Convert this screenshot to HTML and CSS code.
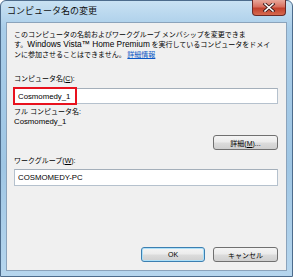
FILE: index.html
```html
<!DOCTYPE html>
<html>

<head>
    <meta charset="utf-8">
    <title>コンピュータ名の変更</title>
    <link rel="stylesheet" href="styles.css">
</head>

<body>

    <div class="window">
        <div class="titlebar">
            <span class="title">コンピュータ名の変更</span>
            <span class="close">
                <svg width="14" height="9" viewBox="0 0 14 9">
                    <path d="M3 1 L11 8 M11 1 L3 8" stroke="#3a1a1a" stroke-width="3.2" stroke-linecap="square"/>
                    <path d="M3 1 L11 8 M11 1 L3 8" stroke="#ffffff" stroke-width="1.6" stroke-linecap="square"/>
                </svg>
            </span>
        </div>

        <div class="client">
            <div class="intro">
                <div class="line">このコンピュータの名前およびワークグループ メンバシップを変更できま</div>
                <div class="line">す。<span class="latin">Windows Vista™ Home Premium</span> を実行しているコンピュータをドメイ</div>
                <div class="line">ンに参加させることはできません。 <a class="more" href="#">詳細情報</a></div>
            </div>

            <label class="label first">コンピュータ名(<u>C</u>):</label>
            <div class="field">
                <input class="textbox" type="text" value="Cosmomedy_1">
                <span class="mark"></span>
            </div>

            <div class="label">フル コンピュータ名:</div>
            <div class="value">Cosmomedy_1</div>

            <div class="row">
                <button class="btn">詳細(<u>M</u>)...</button>
            </div>

            <label class="label group">ワークグループ(<u>W</u>):</label>
            <input class="textbox tall" type="text" value="COSMOMEDY-PC">

            <div class="row footer">
                <button class="btn default">OK</button>
                <button class="btn">キャンセル</button>
            </div>
        </div>
    </div>

</body>

</html>
```

FILE: styles.css
```css
body {
    margin: 0;
    background-color: #ffffff;
    font-family: 'Liberation Sans', 'Noto Sans CJK JP', sans-serif;
    font-size: 7px;
    color: #000000;
}

.window {
    width: 293px;
    height: 277px;
    box-sizing: border-box;
    border: 1px solid #4d6c8c;
    border-radius: 6px 6px 0 0;
    background: linear-gradient(180deg, #c9e2f3 0%, #a9cde9 10%, #9fc6e4 60%, #b6d6ee 100%);
    padding: 0 5px 5px 5px;
    display: flex;
    flex-direction: column;
}

.titlebar {
    height: 21px;
    display: flex;
    align-items: center;
    justify-content: space-between;
    position: relative;
}

.title {
    font-family: 'Noto Sans CJK JP', sans-serif;
    font-size: 9px;
    padding-left: 1px;
    margin-top: -2px;
    color: #111111;
}

.close {
    position: absolute;
    right: 1px;
    top: -1px;
    width: 34px;
    height: 16px;
    box-sizing: border-box;
    border: 1px solid #6b2a26;
    border-top: none;
    border-radius: 0 0 4px 4px;
    background: linear-gradient(180deg, #e9a89b 0%, #d8705f 45%, #c2402c 55%, #d66a4f 100%);
    display: flex;
    align-items: center;
    justify-content: center;
}

.client {
    flex: 1;
    border: 1px solid #8ba3bb;
    background-color: #f0f0f0;
    padding: 6px 8px 8px 7px;
    display: flex;
    flex-direction: column;
}

.intro {
    font-family: 'Noto Sans CJK JP', sans-serif;
    font-size: 7px;
}

.line {
    height: 10px;
    line-height: 10px;
    white-space: nowrap;
}

.latin {
    font-family: 'Liberation Sans', sans-serif;
    font-size: 8.3px;
}

.more {
    color: #0b57c5;
    text-decoration: underline;
}

.label,
.value {
    display: block;
    height: 10px;
    line-height: 10px;
    margin-top: 3px;
    font-family: 'Liberation Sans', 'Noto Sans CJK JP', sans-serif;
}

.label.first {
    margin-top: 15px;
}

.label.group {
    margin-top: 6px;
}

.value {
    margin-top: 0;
    font-size: 7.8px;
}

.field {
    position: relative;
    margin-top: 4px;
}

.textbox {
    display: block;
    width: 100%;
    height: 16px;
    box-sizing: border-box;
    margin: 0;
    margin-top: 3px;
    padding: 0 3px;
    border: 1px solid #b5c1cd;
    border-top-color: #a4afba;
    background-color: #ffffff;
    font-family: 'Liberation Sans', sans-serif;
    font-size: 7.8px;
    color: #000000;
}

.textbox.tall {
    height: 17px;
}

.field .textbox {
    margin-top: 0;
}

.mark {
    position: absolute;
    left: -1px;
    top: -1px;
    width: 64px;
    height: 18px;
    box-sizing: border-box;
    border: 2px solid #e8121e;
}

.row {
    display: flex;
    justify-content: flex-end;
    gap: 8px;
    margin-top: 8px;
}

.footer {
    margin-top: auto;
}

.btn {
    width: 65px;
    height: 15px;
    box-sizing: border-box;
    margin: 0;
    padding: 0;
    border: 1px solid #707070;
    border-radius: 3px;
    background: linear-gradient(180deg, #f4f4f4 0%, #ebebeb 48%, #dcdcdc 52%, #cfcfcf 100%);
    font-family: 'Liberation Sans', 'Noto Sans CJK JP', sans-serif;
    font-size: 7px;
    color: #000000;
}

.btn.default {
    width: 64px;
    border-color: #3c7fb1;
    box-shadow: inset 0 0 0 1px #aee0f8;
}
```
